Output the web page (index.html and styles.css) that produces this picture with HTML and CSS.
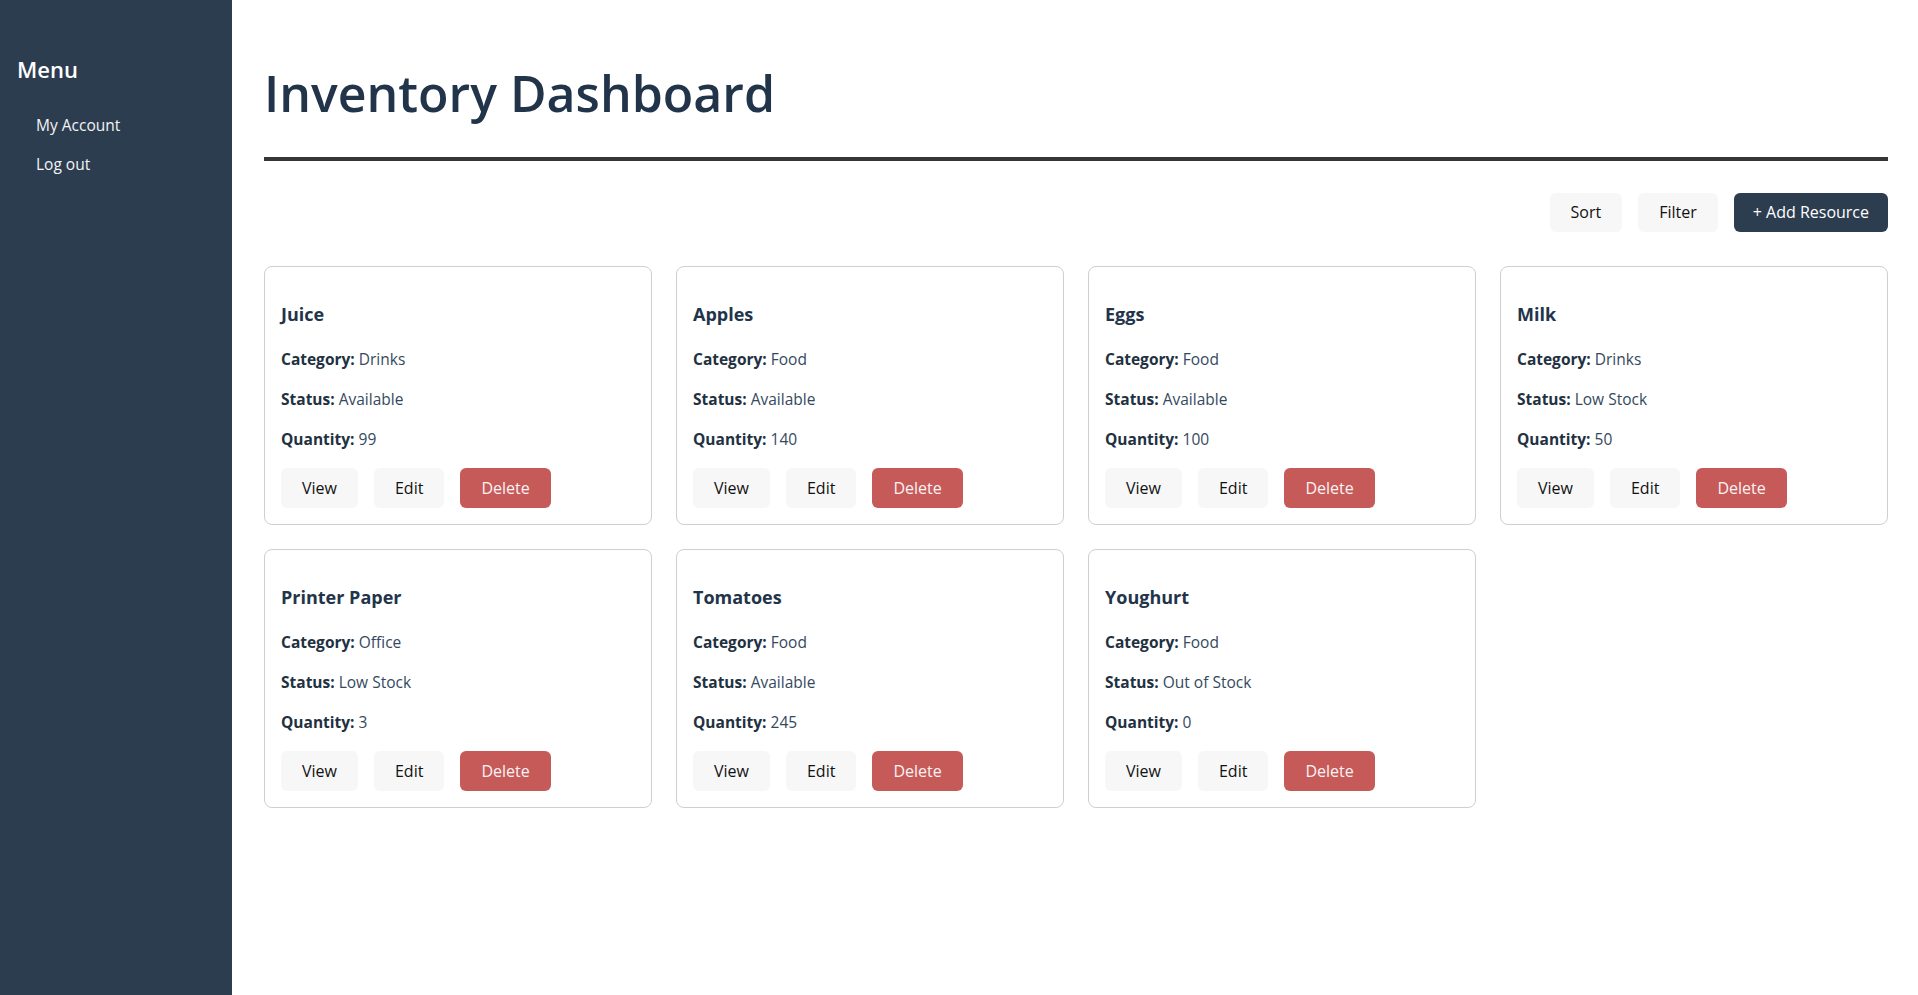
FILE: index.html
```html
<!DOCTYPE html>
<html lang="en">
<head>
<meta charset="utf-8">
<title>Inventory Dashboard</title>
<link rel="stylesheet" href="styles.css">
</head>
<body>
<aside class="sidebar">
  <h2 class="sidebar-title">Menu</h2>
  <ul class="sidebar-menu">
    <li><a href="#">My Account</a></li>
    <li><a href="#">Log out</a></li>
  </ul>
</aside>
<main class="main">
  <h1 class="page-title">Inventory Dashboard</h1>
  <div class="toolbar">
    <button class="btn btn-light">Sort</button>
    <button class="btn btn-light">Filter</button>
    <button class="btn btn-dark">+ Add Resource</button>
  </div>
  <section class="grid">
    <article class="card">
      <h3 class="card-title">Juice</h3>
      <p class="card-line"><strong>Category:</strong> Drinks</p>
      <p class="card-line"><strong>Status:</strong> Available</p>
      <p class="card-line"><strong>Quantity:</strong> 99</p>
      <div class="card-actions">
        <button class="btn btn-light">View</button>
        <button class="btn btn-light">Edit</button>
        <button class="btn btn-danger">Delete</button>
      </div>
    </article>
    <article class="card">
      <h3 class="card-title">Apples</h3>
      <p class="card-line"><strong>Category:</strong> Food</p>
      <p class="card-line"><strong>Status:</strong> Available</p>
      <p class="card-line"><strong>Quantity:</strong> 140</p>
      <div class="card-actions">
        <button class="btn btn-light">View</button>
        <button class="btn btn-light">Edit</button>
        <button class="btn btn-danger">Delete</button>
      </div>
    </article>
    <article class="card">
      <h3 class="card-title">Eggs</h3>
      <p class="card-line"><strong>Category:</strong> Food</p>
      <p class="card-line"><strong>Status:</strong> Available</p>
      <p class="card-line"><strong>Quantity:</strong> 100</p>
      <div class="card-actions">
        <button class="btn btn-light">View</button>
        <button class="btn btn-light">Edit</button>
        <button class="btn btn-danger">Delete</button>
      </div>
    </article>
    <article class="card">
      <h3 class="card-title">Milk</h3>
      <p class="card-line"><strong>Category:</strong> Drinks</p>
      <p class="card-line"><strong>Status:</strong> Low Stock</p>
      <p class="card-line"><strong>Quantity:</strong> 50</p>
      <div class="card-actions">
        <button class="btn btn-light">View</button>
        <button class="btn btn-light">Edit</button>
        <button class="btn btn-danger">Delete</button>
      </div>
    </article>
    <article class="card">
      <h3 class="card-title">Printer Paper</h3>
      <p class="card-line"><strong>Category:</strong> Office</p>
      <p class="card-line"><strong>Status:</strong> Low Stock</p>
      <p class="card-line"><strong>Quantity:</strong> 3</p>
      <div class="card-actions">
        <button class="btn btn-light">View</button>
        <button class="btn btn-light">Edit</button>
        <button class="btn btn-danger">Delete</button>
      </div>
    </article>
    <article class="card">
      <h3 class="card-title">Tomatoes</h3>
      <p class="card-line"><strong>Category:</strong> Food</p>
      <p class="card-line"><strong>Status:</strong> Available</p>
      <p class="card-line"><strong>Quantity:</strong> 245</p>
      <div class="card-actions">
        <button class="btn btn-light">View</button>
        <button class="btn btn-light">Edit</button>
        <button class="btn btn-danger">Delete</button>
      </div>
    </article>
    <article class="card">
      <h3 class="card-title">Youghurt</h3>
      <p class="card-line"><strong>Category:</strong> Food</p>
      <p class="card-line"><strong>Status:</strong> Out of Stock</p>
      <p class="card-line"><strong>Quantity:</strong> 0</p>
      <div class="card-actions">
        <button class="btn btn-light">View</button>
        <button class="btn btn-light">Edit</button>
        <button class="btn btn-danger">Delete</button>
      </div>
    </article>
  </section>
</main>
</body>
</html>
```

FILE: styles.css
```css
* {
  box-sizing: border-box;
}

html, body {
  margin: 0;
  padding: 0;
  height: 100%;
}

body {
  display: flex;
  min-height: 100vh;
  font-family: "Open Sans", "Noto Sans", "DejaVu Sans", sans-serif;
  background: #ffffff;
  color: #2c3e50;
}

.sidebar {
  width: 232px;
  flex: 0 0 232px;
  background: #2d3d50;
  color: #ffffff;
  padding: 0 16px 0 17px;
  min-height: 100vh;
}

.sidebar-title {
  margin: 54px 0 0;
  font-size: 22px;
  font-weight: 600;
  line-height: 30px;
  color: #ffffff;
}

.sidebar-menu {
  list-style: none;
  margin: 29px 0 0;
  padding: 0 0 0 19px;
  display: flex;
  flex-direction: column;
  gap: 15px;
}

.sidebar-menu a {
  display: block;
  color: #f2f4f6;
  text-decoration: none;
  font-size: 15.5px;
  line-height: 24px;
}

.main {
  flex: 1;
  padding: 0 30px 40px 32px;
  min-width: 0;
}

.page-title {
  margin: 63px 0 0;
  padding-bottom: 34px;
  border-bottom: 4px solid #363636;
  font-size: 50px;
  font-weight: 600;
  line-height: 60px;
  color: #22344a;
}

.toolbar {
  display: flex;
  justify-content: flex-end;
  gap: 16px;
  margin-top: 32px;
}

.btn {
  font-family: inherit;
  font-size: 16px;
  line-height: 20px;
  padding: 10px 21px;
  border: none;
  border-radius: 6px;
  cursor: pointer;
}

.toolbar .btn {
  line-height: 19px;
}

.btn-light {
  background: #f7f7f7;
  color: #111111;
}

.btn-dark {
  background: #2d3d50;
  color: #ffffff;
  padding-left: 19px;
  padding-right: 19px;
}

.btn-danger {
  background: #c65a59;
  color: #fbf3f3;
}

.grid {
  display: grid;
  grid-template-columns: repeat(4, 1fr);
  gap: 24px;
  margin-top: 34px;
}

.card {
  border: 1px solid #cfcfcf;
  border-radius: 8px;
  padding: 16px;
  background: #ffffff;
}

.card-title {
  margin: 19px 0 21px;
  font-size: 18px;
  font-weight: 700;
  line-height: 24px;
  color: #22344a;
}

.card-line {
  margin: 0 0 16px;
  font-size: 15.5px;
  line-height: 24px;
  color: #34495e;
}

.card-line strong {
  font-weight: 700;
  color: #22313f;
}

.card-actions {
  display: flex;
  gap: 16px;
  margin-top: 17px;
}
```
